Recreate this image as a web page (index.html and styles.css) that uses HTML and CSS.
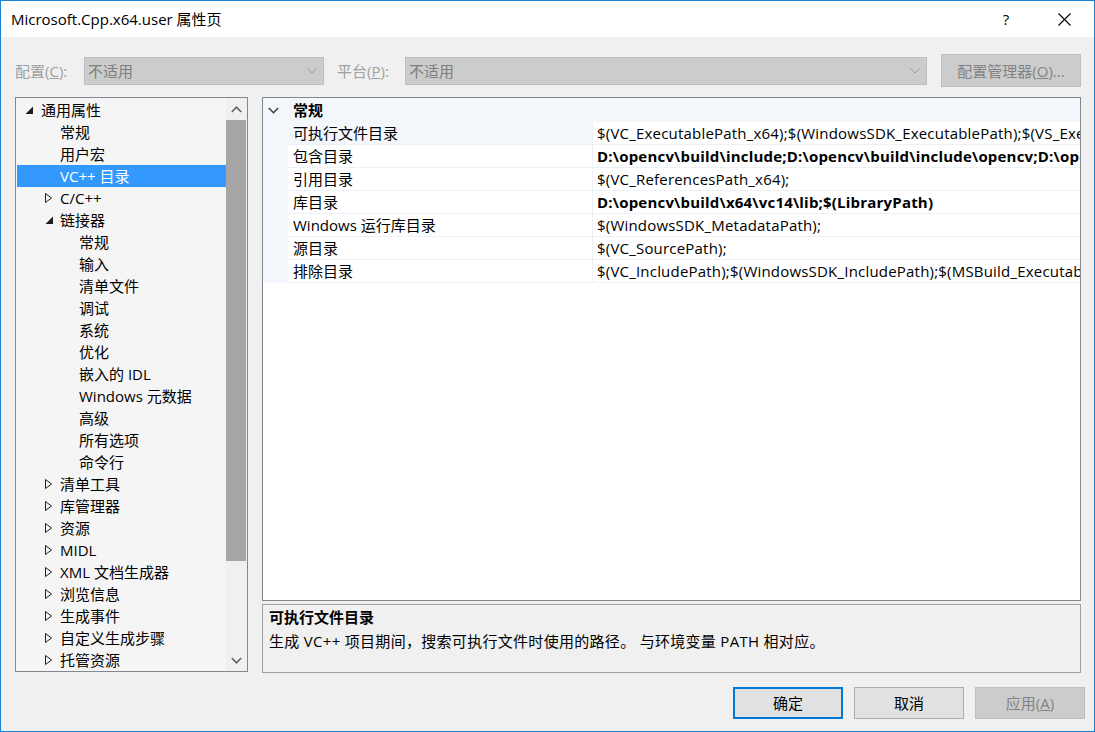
FILE: index.html
```html
<!DOCTYPE html>
<html lang="zh-CN">
<head>
<meta charset="utf-8">
<title>Microsoft.Cpp.x64.user 属性页</title>
<link rel="stylesheet" href="styles.css">
</head>
<body>
<div class="window">
  <div class="titlebar">
    <span class="title">Microsoft.Cpp.x64.user 属性页</span>
    <span class="tb-btn help">?</span>
    <span class="tb-btn close">
      <svg width="13" height="13" viewBox="0 0 13 13"><path d="M0.5 0.5 L12.5 12.5 M12.5 0.5 L0.5 12.5" stroke="#000" stroke-width="1.1" fill="none"/></svg>
    </span>
  </div>

  <div class="config-row">
    <span class="cfg-label lbl-config">配置(<u>C</u>):</span>
    <div class="combo combo-config">
      <span class="combo-text">不适用</span>
      <svg class="combo-chev" width="10" height="6" viewBox="0 0 10 6"><polyline points="0.5,0.5 5,5 9.5,0.5" fill="none" stroke="#9a9a9a" stroke-width="1"/></svg>
    </div>
    <span class="cfg-label lbl-platform">平台(<u>P</u>):</span>
    <div class="combo combo-platform">
      <span class="combo-text">不适用</span>
      <svg class="combo-chev" width="10" height="6" viewBox="0 0 10 6"><polyline points="0.5,0.5 5,5 9.5,0.5" fill="none" stroke="#9a9a9a" stroke-width="1"/></svg>
    </div>
    <div class="btn btn-disabled btn-cfgmgr">配置管理器(<u>O</u>)...</div>
  </div>

  <div class="main">
    <div class="tree">
      <div class="tree-list">
        <div class="trow lv0"><span class="slot"><svg width="9" height="9" viewBox="0 0 9 9"><path d="M8 0.5 L8 8 L0.5 8 Z" fill="#1e1e1e"/></svg></span>通用属性</div>
        <div class="trow lv1"><span class="slot"></span>常规</div>
        <div class="trow lv1"><span class="slot"></span>用户宏</div>
        <div class="trow lv1 selected"><span class="slot"></span>VC++ 目录</div>
        <div class="trow lv1"><span class="slot"><svg width="8" height="10" viewBox="0 0 8 10"><polygon points="0.5,0.5 6.5,5 0.5,9.5" fill="none" stroke="#1e1e1e" stroke-width="1"/></svg></span>C/C++</div>
        <div class="trow lv1"><span class="slot"><svg width="9" height="9" viewBox="0 0 9 9"><path d="M8 0.5 L8 8 L0.5 8 Z" fill="#1e1e1e"/></svg></span>链接器</div>
        <div class="trow lv2"><span class="slot"></span>常规</div>
        <div class="trow lv2"><span class="slot"></span>输入</div>
        <div class="trow lv2"><span class="slot"></span>清单文件</div>
        <div class="trow lv2"><span class="slot"></span>调试</div>
        <div class="trow lv2"><span class="slot"></span>系统</div>
        <div class="trow lv2"><span class="slot"></span>优化</div>
        <div class="trow lv2"><span class="slot"></span>嵌入的 IDL</div>
        <div class="trow lv2"><span class="slot"></span>Windows 元数据</div>
        <div class="trow lv2"><span class="slot"></span>高级</div>
        <div class="trow lv2"><span class="slot"></span>所有选项</div>
        <div class="trow lv2"><span class="slot"></span>命令行</div>
        <div class="trow lv1"><span class="slot"><svg width="8" height="10" viewBox="0 0 8 10"><polygon points="0.5,0.5 6.5,5 0.5,9.5" fill="none" stroke="#1e1e1e" stroke-width="1"/></svg></span>清单工具</div>
        <div class="trow lv1"><span class="slot"><svg width="8" height="10" viewBox="0 0 8 10"><polygon points="0.5,0.5 6.5,5 0.5,9.5" fill="none" stroke="#1e1e1e" stroke-width="1"/></svg></span>库管理器</div>
        <div class="trow lv1"><span class="slot"><svg width="8" height="10" viewBox="0 0 8 10"><polygon points="0.5,0.5 6.5,5 0.5,9.5" fill="none" stroke="#1e1e1e" stroke-width="1"/></svg></span>资源</div>
        <div class="trow lv1"><span class="slot"><svg width="8" height="10" viewBox="0 0 8 10"><polygon points="0.5,0.5 6.5,5 0.5,9.5" fill="none" stroke="#1e1e1e" stroke-width="1"/></svg></span>MIDL</div>
        <div class="trow lv1"><span class="slot"><svg width="8" height="10" viewBox="0 0 8 10"><polygon points="0.5,0.5 6.5,5 0.5,9.5" fill="none" stroke="#1e1e1e" stroke-width="1"/></svg></span>XML 文档生成器</div>
        <div class="trow lv1"><span class="slot"><svg width="8" height="10" viewBox="0 0 8 10"><polygon points="0.5,0.5 6.5,5 0.5,9.5" fill="none" stroke="#1e1e1e" stroke-width="1"/></svg></span>浏览信息</div>
        <div class="trow lv1"><span class="slot"><svg width="8" height="10" viewBox="0 0 8 10"><polygon points="0.5,0.5 6.5,5 0.5,9.5" fill="none" stroke="#1e1e1e" stroke-width="1"/></svg></span>生成事件</div>
        <div class="trow lv1"><span class="slot"><svg width="8" height="10" viewBox="0 0 8 10"><polygon points="0.5,0.5 6.5,5 0.5,9.5" fill="none" stroke="#1e1e1e" stroke-width="1"/></svg></span>自定义生成步骤</div>
        <div class="trow lv1"><span class="slot"><svg width="8" height="10" viewBox="0 0 8 10"><polygon points="0.5,0.5 6.5,5 0.5,9.5" fill="none" stroke="#1e1e1e" stroke-width="1"/></svg></span>托管资源</div>
      </div>
      <div class="vscroll">
        <div class="sb-arrow"><svg width="11" height="7" viewBox="0 0 11 7"><polyline points="0.8,6 5.5,1.2 10.2,6" fill="none" stroke="#606060" stroke-width="1.6"/></svg></div>
        <div class="sb-track"><div class="sb-thumb"></div></div>
        <div class="sb-arrow"><svg width="11" height="7" viewBox="0 0 11 7"><polyline points="0.8,1 5.5,5.8 10.2,1" fill="none" stroke="#606060" stroke-width="1.6"/></svg></div>
      </div>
    </div>

    <div class="right-col">
      <div class="grid">
        <div class="grid-header">
          <span class="strip"><svg width="11" height="7" viewBox="0 0 11 7"><polyline points="0.8,1 5.5,5.8 10.2,1" fill="none" stroke="#3c3c3c" stroke-width="1.5"/></svg></span>
          <span class="cat">常规</span>
        </div>
        <div class="prow">
          <span class="strip"></span>
          <span class="pname current">可执行文件目录</span>
          <span class="pval">$(VC_ExecutablePath_x64);$(WindowsSDK_ExecutablePath);$(VS_ExecutablePath);$(MSBuild_ExecutablePath);$(FxCopDir);$(PATH);</span>
        </div>
        <div class="prow">
          <span class="strip"></span>
          <span class="pname">包含目录</span>
          <span class="pval bold">D:\opencv\build\include;D:\opencv\build\include\opencv;D:\opencv\build\include\opencv2;$(IncludePath)</span>
        </div>
        <div class="prow">
          <span class="strip"></span>
          <span class="pname">引用目录</span>
          <span class="pval">$(VC_ReferencesPath_x64);</span>
        </div>
        <div class="prow">
          <span class="strip"></span>
          <span class="pname">库目录</span>
          <span class="pval bold">D:\opencv\build\x64\vc14\lib;$(LibraryPath)</span>
        </div>
        <div class="prow">
          <span class="strip"></span>
          <span class="pname">Windows 运行库目录</span>
          <span class="pval">$(WindowsSDK_MetadataPath);</span>
        </div>
        <div class="prow">
          <span class="strip"></span>
          <span class="pname">源目录</span>
          <span class="pval">$(VC_SourcePath);</span>
        </div>
        <div class="prow">
          <span class="strip"></span>
          <span class="pname">排除目录</span>
          <span class="pval">$(VC_IncludePath);$(WindowsSDK_IncludePath);$(MSBuild_ExecutablePath);$(VC_LibraryPath_x64);</span>
        </div>
      </div>
      <div class="desc">
        <div class="desc-title">可执行文件目录</div>
        <div class="desc-text">生成 VC++ 项目期间，搜索可执行文件时使用的路径。 与环境变量 PATH 相对应。</div>
      </div>
    </div>
  </div>

  <div class="button-row">
    <div class="btn btn-default">确定</div>
    <div class="btn btn-normal">取消</div>
    <div class="btn btn-disabled btn-apply">应用(<u>A</u>)</div>
  </div>
</div>
</body>
</html>
```

FILE: styles.css
```css
* {
  box-sizing: border-box;
}

html,
body {
  margin: 0;
  padding: 0;
}

body {
  font-family: "Open Sans", "Noto Sans CJK SC", sans-serif;
  font-size: 15px;
  color: #000;
  background: #f0f0f0;
}

.window {
  width: 1095px;
  height: 732px;
  border: 1px solid #1883d7;
  background: #f0f0f0;
  display: flex;
  flex-direction: column;
  overflow: hidden;
}

/* ---------- title bar ---------- */
.titlebar {
  flex: none;
  height: 36px;
  background: #fff;
  display: flex;
  align-items: center;
  padding-left: 10px;
}

.title {
  flex: 1;
  line-height: 20px;
  white-space: nowrap;
}

.tb-btn {
  height: 36px;
  display: flex;
  align-items: center;
  justify-content: center;
}

.help {
  width: 56px;
  font-size: 15px;
}

.close {
  width: 60px;
}

/* ---------- configuration row ---------- */
.config-row {
  flex: none;
  margin-top: 17px;
  height: 33px;
  padding-left: 14px;
  display: flex;
  align-items: center;
}

.cfg-label {
  color: #a0a0a0;
  white-space: nowrap;
  line-height: 20px;
}

.lbl-config {
  width: 69px;
}

.lbl-platform {
  width: 68px;
  margin-left: 13px;
}

.combo {
  height: 28px;
  background: #cccccc;
  border: 1px solid #bfbfbf;
  display: flex;
  align-items: center;
  padding-left: 3px;
  padding-right: 6px;
  color: #7e7e7e;
}

.combo-text {
  flex: 1;
  line-height: 20px;
}

.combo-config {
  width: 240px;
}

.combo-platform {
  width: 522px;
}

.btn {
  display: flex;
  align-items: center;
  justify-content: center;
  white-space: nowrap;
  line-height: 20px;
}

.btn-disabled {
  background: #cccccc;
  border: 1px solid #bfbfbf;
  color: #838383;
}

.btn-cfgmgr {
  width: 140px;
  height: 33px;
  margin-left: 14px;
}

/* ---------- main area ---------- */
.main {
  flex: none;
  margin-top: 10px;
  height: 576px;
  padding-left: 14px;
  display: flex;
  align-items: flex-start;
  gap: 14px;
}

.tree {
  width: 233px;
  height: 575px;
  border: 1px solid #828790;
  background: #f5f5f5;
  display: flex;
}

.tree-list {
  width: 210px;
  padding: 1px 0 0 1px;
  overflow: hidden;
}

.trow {
  height: 22px;
  line-height: 22px;
  display: flex;
  align-items: center;
  white-space: nowrap;
}

.trow.selected {
  background: #3399ff;
  color: #fff;
}

.slot {
  width: 15px;
  flex: none;
  display: flex;
  align-items: center;
}

.slot svg {
  display: block;
}

.lv0 {
  padding-left: 8px;
}

.lv0 .slot {
  width: 16px;
}

.lv1 {
  padding-left: 28px;
}

.lv2 {
  padding-left: 47px;
}

.vscroll {
  width: 21px;
  display: flex;
  flex-direction: column;
  background: #f0f0f0;
}

.sb-arrow {
  height: 22px;
  flex: none;
  display: flex;
  align-items: center;
  justify-content: center;
}

.sb-arrow svg {
  display: block;
  margin-right: 1px;
}

.sb-track {
  flex: 1;
}

.sb-thumb {
  height: 441px;
  width: 20px;
  background: #a6a6a6;
}

/* ---------- right column ---------- */
.right-col {
  width: 819px;
  display: flex;
  flex-direction: column;
  gap: 3px;
}

.grid {
  height: 504px;
  border: 1px solid #828790;
  background: #fff;
  overflow: hidden;
}

.grid-header {
  height: 24px;
  background: #f3f6fa;
  display: flex;
  align-items: center;
}

.strip {
  width: 25px;
  flex: none;
  align-self: stretch;
  background: #f3f6fa;
  display: flex;
  align-items: center;
  padding-left: 5px;
}

.strip svg {
  display: block;
}

.cat {
  font-weight: bold;
  padding-left: 5px;
  line-height: 22px;
}

.prow {
  height: 23px;
  display: flex;
}

.pname,
.pval {
  height: 23px;
  line-height: 22px;
  border-bottom: 1px solid #edf0f4;
  white-space: nowrap;
  overflow: hidden;
}

.pname {
  width: 305px;
  flex: none;
  padding-left: 5px;
  border-right: 1px solid #edf0f4;
}

.pname.current {
  background: #f3f6fa;
}

.pval {
  flex: 1;
  padding-left: 4px;
  letter-spacing: 0.2px;
}

.pval.bold {
  font-weight: bold;
}

.desc {
  height: 69px;
  border: 1px solid #a0a0a0;
  padding: 0 6px;
}

.desc-title {
  font-weight: bold;
  line-height: 24px;
}

.desc-text {
  line-height: 24px;
  letter-spacing: 0.3px;
  white-space: nowrap;
}

/* ---------- bottom buttons ---------- */
.button-row {
  flex: none;
  margin-top: 14px;
  height: 32px;
  display: flex;
  justify-content: flex-end;
  gap: 11px;
  padding-right: 9px;
}

.button-row .btn {
  width: 110px;
  height: 32px;
}

.btn-default {
  background: #e1e1e1;
  border: 2px solid #0078d7;
}

.btn-normal {
  background: #e1e1e1;
  border: 1px solid #adadad;
}
```
